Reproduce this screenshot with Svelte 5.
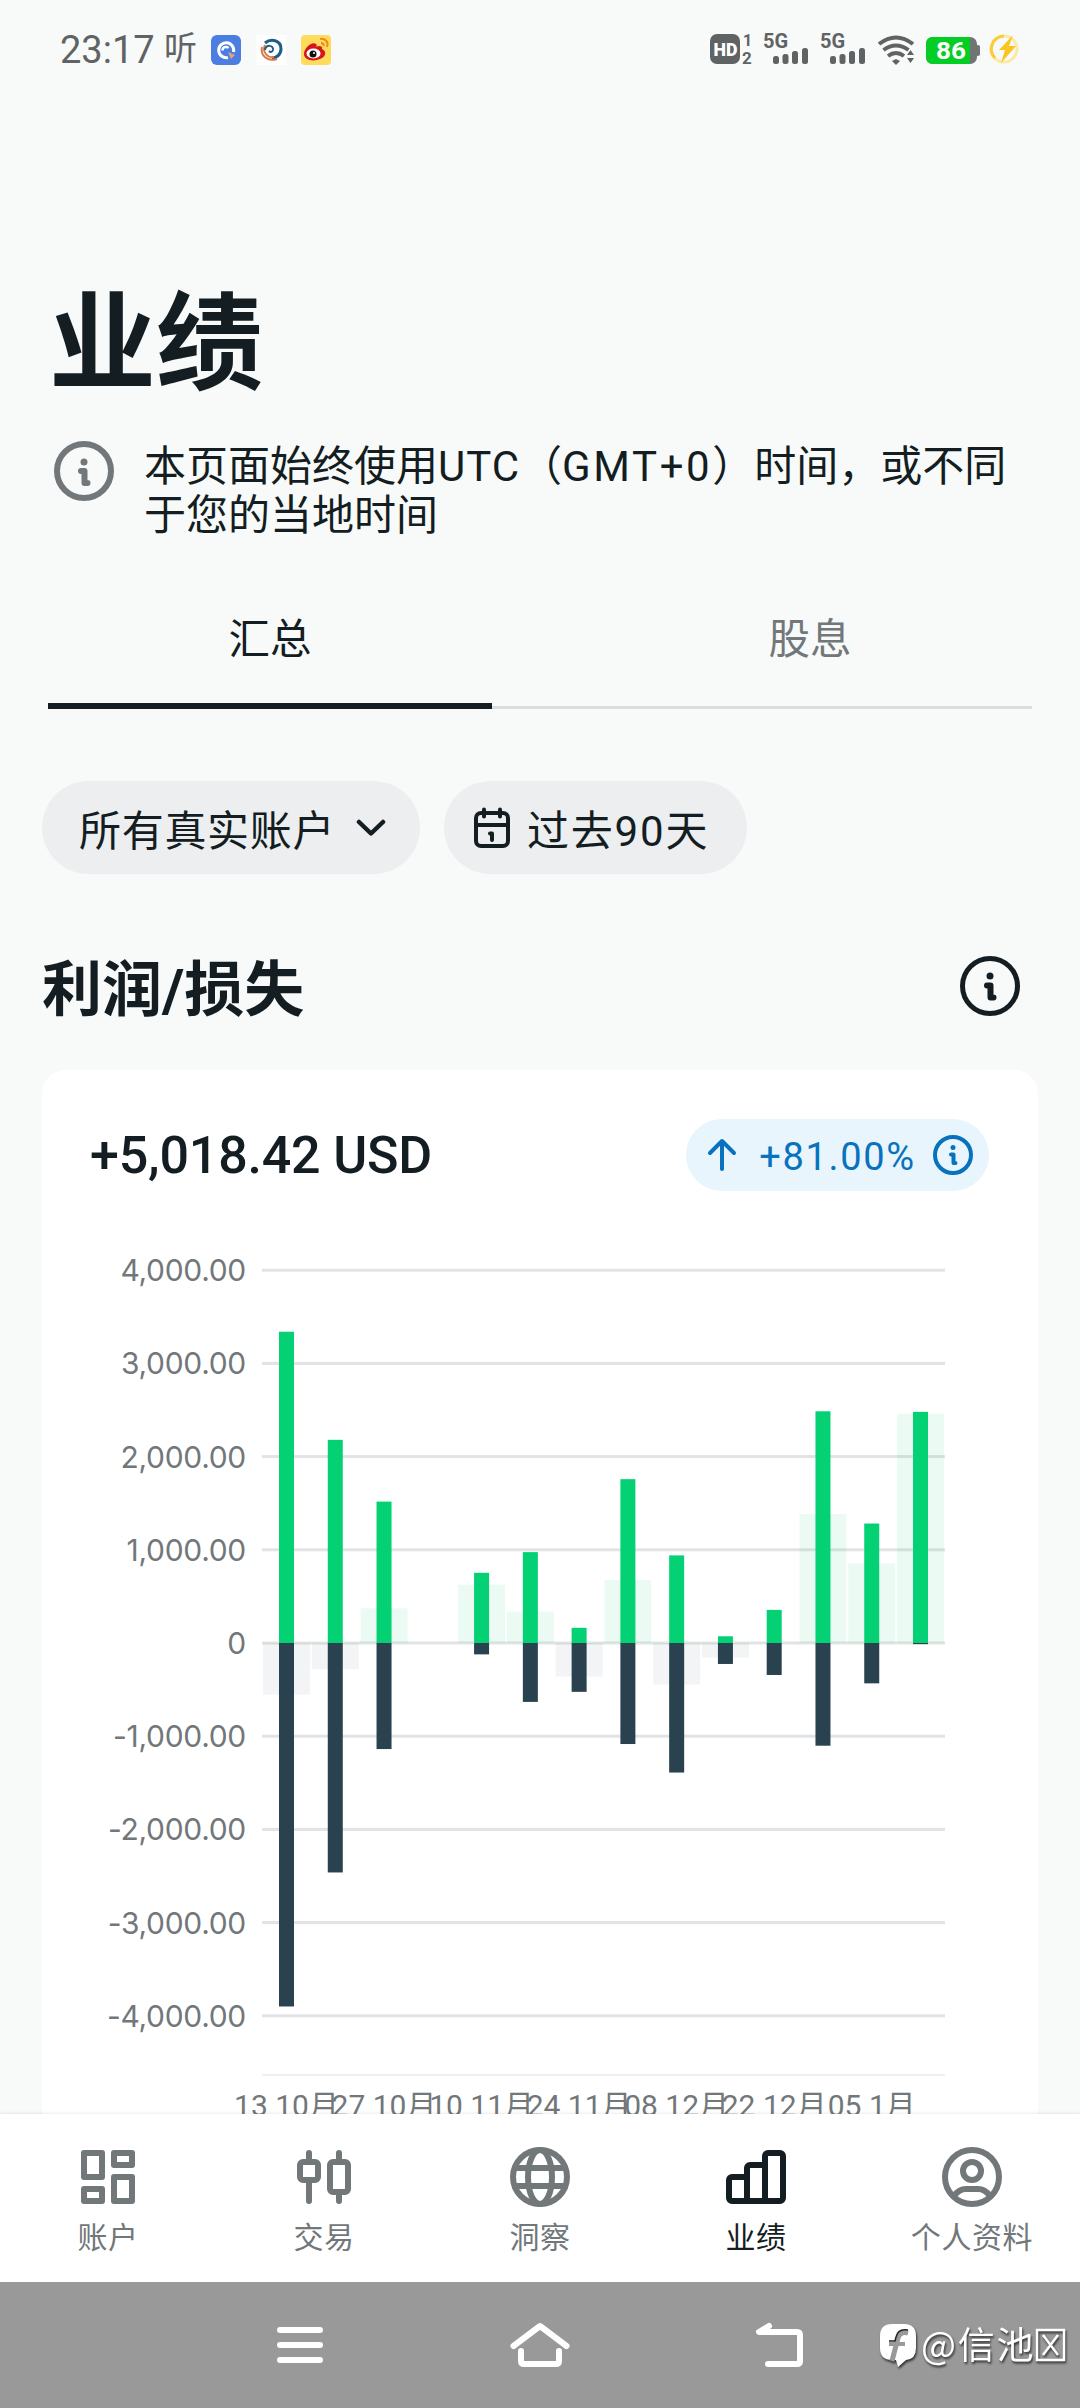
<script>
    const net = [-554, -283, 373, 0, 626, 337, -360, 674, -445, -157, 0, 1385, 855, 2460];
    const profit = [3340, 2180, 1517, 0, 753, 975, 163, 1758, 940, 72, 355, 2486, 1282, 2480];
    const loss = [3900, 2462, 1138, 0, 122, 632, 524, 1084, 1390, 225, 343, 1102, 433, 12];
    const ticks = [4000, 3000, 2000, 1000, 0, -1000, -2000, -3000, -4000];
    const dates = ["13 10月", "27 10月", "10 11月", "24 11月", "08 12月", "22 12月", "05 1月"];

    // chart geometry
    const zero = 403;
    const unit = 0.0932;
    const left = 220;
    const step = 48.77;

    const tabs = [
        { id: "accounts", label: "账户" },
        { id: "trade", label: "交易" },
        { id: "insights", label: "洞察" },
        { id: "performance", label: "业绩" },
        { id: "profile", label: "个人资料" },
    ];
    let section = "summary";
    let active = "performance";

    function format(v) {
        if (v === 0) return "0";
        return v.toLocaleString("en-US", { minimumFractionDigits: 2 });
    }
</script>

<div class="screen">
    <header class="status">
        <span class="time">23:17</span>
        <span class="listen">听</span>
        <svg class="app" width="30" height="30" viewBox="0 0 30 30">
            <rect width="30" height="30" rx="6" fill="#4c7de0" />
            <path d="M17 22.500A7.500 7.500 0 1 1 22.500 17" fill="none" stroke="#fff" stroke-width="3" />
            <path d="M11.500 15.500a3.500 3.500 0 0 1 6-2.500" fill="none" stroke="#fff" stroke-width="2.500" />
            <path d="M17 17l7 3-4 4z" fill="#e2a184" />
        </svg>
        <svg class="app" width="30" height="30" viewBox="0 0 30 30">
            <rect width="30" height="30" fill="#fff" />
            <path d="M9 8c6-5 16-3 16 6 0 6-5 9-9 9" fill="none" stroke="#1c5f82" stroke-width="3" />
            <path d="M6 12c-2 9 6 15 15 12M9 10c-3 7 2 13 9 12" fill="none" stroke="#d77b48" stroke-width="2" />
            <path d="M9 15c1-6 9-5 8 0-1 3-3 2-4 1" fill="none" stroke="#1c5f82" stroke-width="2" />
        </svg>
        <svg class="app" width="30" height="30" viewBox="0 0 30 30">
            <rect width="30" height="30" rx="4" fill="#fddb5b" />
            <path d="M3 19c0-6 8-13 12-10 1 1 1 2 0 3 3-2 7-1 6 2 5 2 4 8-2 10-7 3-16 1-16-5z" fill="#d5161c" />
            <ellipse cx="12.500" cy="18.500" rx="7" ry="5" fill="#fff" />
            <circle cx="12" cy="19" r="3.500" fill="#111" />
            <circle cx="13" cy="18" r="1" fill="#fff" />
            <path d="M19 4c5-1 9 3 7 8M20 8c2 0 3 1 2.500 3" fill="none" stroke="#f08a1c" stroke-width="2" />
        </svg>
        <svg class="signals" width="312" height="36" viewBox="0 0 312 36">
            <rect x="0" y="2" width="30" height="30" rx="7" fill="#606364" />
            <text x="3.500" y="24" font-size="18" font-weight="900" fill="#fff" textLength="24" lengthAdjust="spacingAndGlyphs">HD</text>
            <g fill="#606364" font-weight="700">
                <text x="33" y="14" font-size="16">1</text>
                <text x="32" y="32" font-size="17">2</text>
                <text x="53" y="16" font-size="20">5G</text>
                <text x="110" y="16" font-size="20">5G</text>
            </g>
            <g fill="#606364">
                <rect x="63" y="24" width="6" height="8" rx="2.500" />
                <rect x="72.500" y="22" width="6" height="10" rx="2.500" />
                <rect x="82" y="19" width="6" height="13" rx="2.500" />
                <rect x="92" y="16" width="6" height="16" rx="2.500" />
                <rect x="120" y="24" width="6" height="8" rx="2.500" />
                <rect x="129.500" y="22" width="6" height="10" rx="2.500" />
                <rect x="139" y="19" width="6" height="13" rx="2.500" />
                <rect x="149" y="16" width="6" height="16" rx="2.500" />
                <path d="M182 29l4-2 4 2-4 4zM197 23l3.500-5 3.500 5zM197 26h7l-3.500 5z" />
            </g>
            <g fill="none" stroke="#606364" stroke-width="4">
                <path d="M169 12q17-13 34 0" />
                <path d="M173.500 18q12.500-9 25 0" />
                <path d="M178 24q8-6 16 0" />
            </g>
            <rect x="216" y="5" width="51" height="27" rx="7" fill="#707475" />
            <rect x="266" y="13" width="4" height="11" rx="2" fill="#707475" />
            <path d="M223 5h37v27h-37q-7 0-7-7v-13q0-7 7-7z" fill="#04cd24" />
            <text x="226" y="27" font-size="24" font-weight="700" fill="#fff" textLength="30" lengthAdjust="spacingAndGlyphs">86</text>
            <circle cx="294" cy="17" r="13" fill="none" stroke="#fde8a4" stroke-width="3" />
            <path d="M294 4a13 13 0 0 0-9 22" fill="none" stroke="#fbcb38" stroke-width="3" />
            <path d="M303 3l-14 15h6l-4 13 15-17h-7z" fill="#fbc51f" />
        </svg>
    </header>

    <main>
        <h1>业绩</h1>
        <div class="notice">
            <svg width="60" height="60" viewBox="0 0 60 60">
                <circle cx="30" cy="30" r="27" fill="none" stroke="#72777a" stroke-width="6" />
                <circle cx="30" cy="21" r="3.500" fill="#72777a" />
                <path d="M27 30h3.500v12h3" fill="none" stroke="#72777a" stroke-width="6" stroke-linecap="round" stroke-linejoin="round" />
            </svg>
            <p>本页面始终使用<span class="utc">UTC</span>（<span class="gmt">GMT+0</span>）时间，或不同<br />于您的当地时间</p>
        </div>

        <div class="tabs">
            <button class:on={section === "summary"} on:click={() => (section = "summary")}>汇总</button>
            <button class:on={section === "dividends"} on:click={() => (section = "dividends")}>股息</button>
        </div>

        <div class="filters">
            <button class="pill account">
                所有真实账户
                <svg width="30" height="18" viewBox="0 0 30 18">
                    <path d="M3 3l12 11.500L27 3" fill="none" stroke="#131d22" stroke-width="4.500" stroke-linecap="round" stroke-linejoin="round" />
                </svg>
            </button>
            <button class="pill period">
                <svg width="36" height="42" viewBox="0 0 36 42">
                    <rect x="2" y="6" width="32" height="33" rx="5" fill="none" stroke="#131d22" stroke-width="4" />
                    <path d="M10 2.500v7M26 2.500v7M2 18h32M16 26.500h2v6.500" fill="none" stroke="#131d22" stroke-width="4" stroke-linecap="round" stroke-linejoin="round" />
                </svg>
                过去90天
            </button>
        </div>

        <div class="heading">
            <h2>利润/损失</h2>
            <svg width="60" height="60" viewBox="0 0 60 60">
                <circle cx="30" cy="30" r="27.500" fill="none" stroke="#131d22" stroke-width="5" />
                <circle cx="30" cy="20" r="3.500" fill="#131d22" />
                <path d="M27 29.500h3.500v12h3" fill="none" stroke="#131d22" stroke-width="6" stroke-linecap="round" stroke-linejoin="round" />
            </svg>
        </div>

        <section class="card">
            <div class="total">
                <strong>+5,018.42 USD</strong>
                <div class="badge">
                    <svg width="30" height="34" viewBox="0 0 30 34">
                        <path d="M15 31V3M3 15L15 3l12 12" fill="none" stroke="#0872bd" stroke-width="4" stroke-linecap="round" stroke-linejoin="round" />
                    </svg>
                    <span>+81.00%</span>
                    <svg width="40" height="40" viewBox="0 0 40 40">
                        <circle cx="20" cy="20" r="18" fill="none" stroke="#0872bd" stroke-width="4" />
                        <circle cx="20" cy="12.500" r="2.500" fill="#0872bd" />
                        <path d="M18 19.500h2.500v8.500h2" fill="none" stroke="#0872bd" stroke-width="4" stroke-linecap="round" stroke-linejoin="round" />
                    </svg>
                </div>
            </div>

            <svg class="chart" width="996" height="880" viewBox="0 0 996 880">
                {#each ticks as t}
                    <rect x={left} y={zero - t * unit - 1.5} width="683" height="3" fill="#e2e3e4" />
                    <text class="tick" x="204" y={zero - t * unit + 11} text-anchor="end">{format(t)}</text>
                {/each}
                {#each net as v, i}
                    <rect
                        x={left + 1 + i * step}
                        y={zero - Math.max(v, 0) * unit}
                        width="47"
                        height={Math.abs(v) * unit}
                        fill={v > 0 ? "#04cd72" : "#2a424f"}
                        fill-opacity={v > 0 ? 0.08 : 0.06}
                    />
                {/each}
                {#each profit as v, i}
                    <rect x={left + 17 + i * step} y={zero - v * unit} width="15" height={v * unit} fill="#04d173" />
                    <rect x={left + 17 + i * step} y={zero} width="15" height={loss[i] * unit} fill="#2a424f" />
                {/each}
                <rect x={left} y="834" width="683" height="2" fill="#eff0f0" />
                {#each dates as d, i}
                    <text class="date" x={left + 24.500 + i * 97.54} y="876" text-anchor="middle">{d}</text>
                {/each}
            </svg>
        </section>
    </main>

    <nav>
        {#each tabs as tab}
            <button class:current={active === tab.id} on:click={() => (active = tab.id)}>
                <svg width="60" height="60" viewBox="0 0 60 60" fill="none" stroke="currentColor" stroke-width="6">
                    {#if tab.id === "accounts"}
                        <g stroke-linejoin="round">
                            <rect x="6" y="6" width="18" height="24" />
                            <rect x="36" y="6" width="18" height="12" />
                            <rect x="6" y="42" width="18" height="12" />
                            <rect x="36" y="30" width="18" height="24" />
                        </g>
                    {:else if tab.id === "trade"}
                        <rect x="6" y="15" width="18" height="18" rx="3" />
                        <rect x="36" y="15" width="18" height="30" rx="3" />
                        <path d="M15 6v9M15 33v21M45 6v9M45 45v9" stroke-linecap="round" />
                    {:else if tab.id === "insights"}
                        <circle cx="30" cy="30" r="27" />
                        <ellipse cx="30" cy="30" rx="12" ry="27" />
                        <path d="M4 21h52M4 39h52" />
                    {:else if tab.id === "performance"}
                        <path
                            d="M3 33a3 3 0 0 1 3-3h15V21a3 3 0 0 1 3-3h15V9a3 3 0 0 1 3-3h12a3 3 0 0 1 3 3v42a3 3 0 0 1-3 3H6a3 3 0 0 1-3-3zM21 30v24M39 18v36"
                        />
                    {:else}
                        <circle cx="30" cy="30" r="27" />
                        <circle cx="30" cy="24" r="9" />
                        <path d="M12 49q5-7 12-7h12q7 0 12 7" />
                    {/if}
                </svg>
                <span>{tab.label}</span>
            </button>
        {/each}
    </nav>

    <footer>
        <svg width="46" height="38" viewBox="0 0 46 38">
            <path d="M3 4h40M3 19h40M3 34h40" stroke="#fff" stroke-width="6" stroke-linecap="round" />
        </svg>
        <svg width="60" height="46" viewBox="0 0 60 46">
            <path d="M3.500 24L30 4l26.500 20M11 29v10q0 3 3 3h32q3 0 3-3V29" fill="none" stroke="#fff" stroke-width="6" stroke-linecap="round" stroke-linejoin="round" />
        </svg>
        <svg class="back" width="50" height="46" viewBox="0 0 50 46">
            <path d="M14 4L4 10h38q3 0 3 3v26q0 3-3 3H13" fill="none" stroke="#fff" stroke-width="6" stroke-linecap="round" stroke-linejoin="round" />
        </svg>
        <div class="mark">
            <svg width="41" height="46" viewBox="0 0 41 46">
                <path d="M12 1h12q12 0 12 12v12q0 11-10 12l-8 7-2-7h-4Q0 37 0 25V13Q0 1 12 1z" fill="#fff" />
                <path d="M28 10q-8-2-10 5l-6 23" fill="none" stroke="#999" stroke-width="5" />
                <path d="M9 21h16" fill="none" stroke="#999" stroke-width="4" />
                <path d="M28 7q-10-2-12 7l-1 4H9" fill="none" stroke="#222" stroke-width="1.500" />
            </svg>
            <span>@信池</span>
            <svg width="32" height="38" viewBox="0 0 32 38">
                <path d="M2 3h27v30H2zM8 8l15 20M23 8L8 28" fill="none" stroke="#fff" stroke-width="2.500" />
            </svg>
        </div>
    </footer>
</div>

<style>
    :global(body) {
        margin: 0;
        background: #f8faf9;
    }
    .screen {
        width: 1080px;
        height: 2408px;
        display: flex;
        flex-direction: column;
        overflow: hidden;
        background: #f8faf9;
        color: #131d22;
        font-family: Roboto, "Noto Sans CJK SC", sans-serif;
    }
    button {
        border: 0;
        padding: 0;
        background: none;
        color: inherit;
        font-family: inherit;
    }
    svg {
        display: block;
        flex: none;
    }
    .signals {
        margin-left: auto;
        overflow: visible;
    }
    h1,
    h2,
    p {
        margin: 0;
    }

    .status {
        display: flex;
        align-items: center;
        height: 100px;
        flex: none;
        padding: 0 58px 0 60px;
        box-sizing: border-box;
        color: #606364;
    }
    .time {
        font-size: 38px;
        width: 104px;
        white-space: nowrap;
    }
    .listen {
        font-size: 33px;
        line-height: 44px;
        padding-bottom: 3px;
        width: 47px;
    }
    .app {
        margin-right: 15px;
    }

    main {
        flex: 1;
        min-height: 0;
        overflow: hidden;
        padding: 0 42px;
    }
    h1 {
        margin: 180px 0 0 7px;
        font-size: 107px;
        line-height: 130px;
        font-weight: 700;
    }
    .notice {
        display: flex;
        gap: 30px;
        margin: 33px 0 0 12px;
    }
    .notice svg {
        margin-top: -2px;
    }
    .notice p {
        font-size: 42px;
        line-height: 48.500px;
        white-space: nowrap;
    }
    .utc {
        letter-spacing: 1px;
    }
    .gmt {
        letter-spacing: 2.6px;
    }
    .tabs {
        display: grid;
        grid-template-columns: 444px 444px;
        gap: 96px;
        height: 130px;
        margin: 39px 6px 0;
        box-shadow: inset 0 -3px #dbddde;
    }
    .tabs button {
        font-size: 41.500px;
        padding-bottom: 16px;
        color: #72777a;
    }
    .tabs .on {
        color: #131d22;
        box-shadow: inset 0 -6px #131d22;
    }
    .filters {
        display: flex;
        gap: 24px;
        margin-top: 72px;
    }
    .pill {
        display: flex;
        align-items: center;
        height: 93px;
        padding: 0 0 0 37px;
        border-radius: 47px;
        background: #edeef0;
        font-size: 42px;
        letter-spacing: 0.700px;
        box-sizing: border-box;
        white-space: nowrap;
    }
    .account {
        width: 378px;
        gap: 21px;
    }
    .period {
        width: 303px;
        padding-left: 30px;
        gap: 17px;
        letter-spacing: 1.800px;
    }
    .heading {
        display: flex;
        justify-content: space-between;
        align-items: center;
        height: 80px;
        margin: 72px 18px 0 0;
    }
    h2 {
        margin-top: -4px;
        font-size: 60px;
        font-weight: 700;
    }
    .card {
        height: 1100px;
        margin-top: 44px;
        border-radius: 24px;
        background: #fff;
    }
    .total {
        display: flex;
        justify-content: space-between;
        align-items: center;
        height: 170px;
        padding: 0 49px 0 48px;
    }
    .total strong {
        font-size: 52px;
        font-weight: 500;
        letter-spacing: -0.200px;
    }
    .badge {
        display: flex;
        align-items: center;
        width: 303px;
        height: 72px;
        padding: 0 16px 0 21px;
        border-radius: 36px;
        box-sizing: border-box;
        background: #e9f5fd;
        color: #0872bd;
        font-size: 38px;
        justify-content: space-between;
    }
    .badge span {
        letter-spacing: 1.700px;
        margin: 3px 0 0 5px;
    }
    .chart text {
        fill: #72777a;
        font-size: 31px;
    }
    .chart .tick {
        font-family: Inter, sans-serif;
        font-size: 30px;
        letter-spacing: -0.300px;
    }
    .chart .date {
        font-size: 30px;
    }

    nav {
        display: grid;
        grid-template-columns: repeat(5, 1fr);
        height: 168px;
        flex: none;
        background: #fff;
        color: #72777a;
        box-shadow: 0 0 4px rgba(0, 0, 0, 0.12);
        position: relative;
    }
    nav button {
        display: flex;
        flex-direction: column;
        align-items: center;
        padding-top: 33px;
        font-size: 30px;
        line-height: 40px;
        letter-spacing: 0.600px;
        gap: 11px;
    }
    nav .current {
        color: #131d22;
    }
    footer {
        position: relative;
        display: flex;
        align-items: center;
        height: 126px;
        flex: none;
        padding-left: 277px;
        gap: 187px;
        background: #999;
    }
    .back {
        margin-left: -2px;
    }
    .mark {
        position: absolute;
        left: 880px;
        top: 40px;
        display: flex;
        align-items: center;
        color: #fff;
        font-family: "Noto Sans CJK SC", sans-serif;
        font-size: 37px;
        line-height: 54px;
        letter-spacing: 1.700px;
        white-space: nowrap;
        filter: drop-shadow(1px 2px 1px #333);
    }
    .mark span {
        margin-top: -6px;
    }
</style>
